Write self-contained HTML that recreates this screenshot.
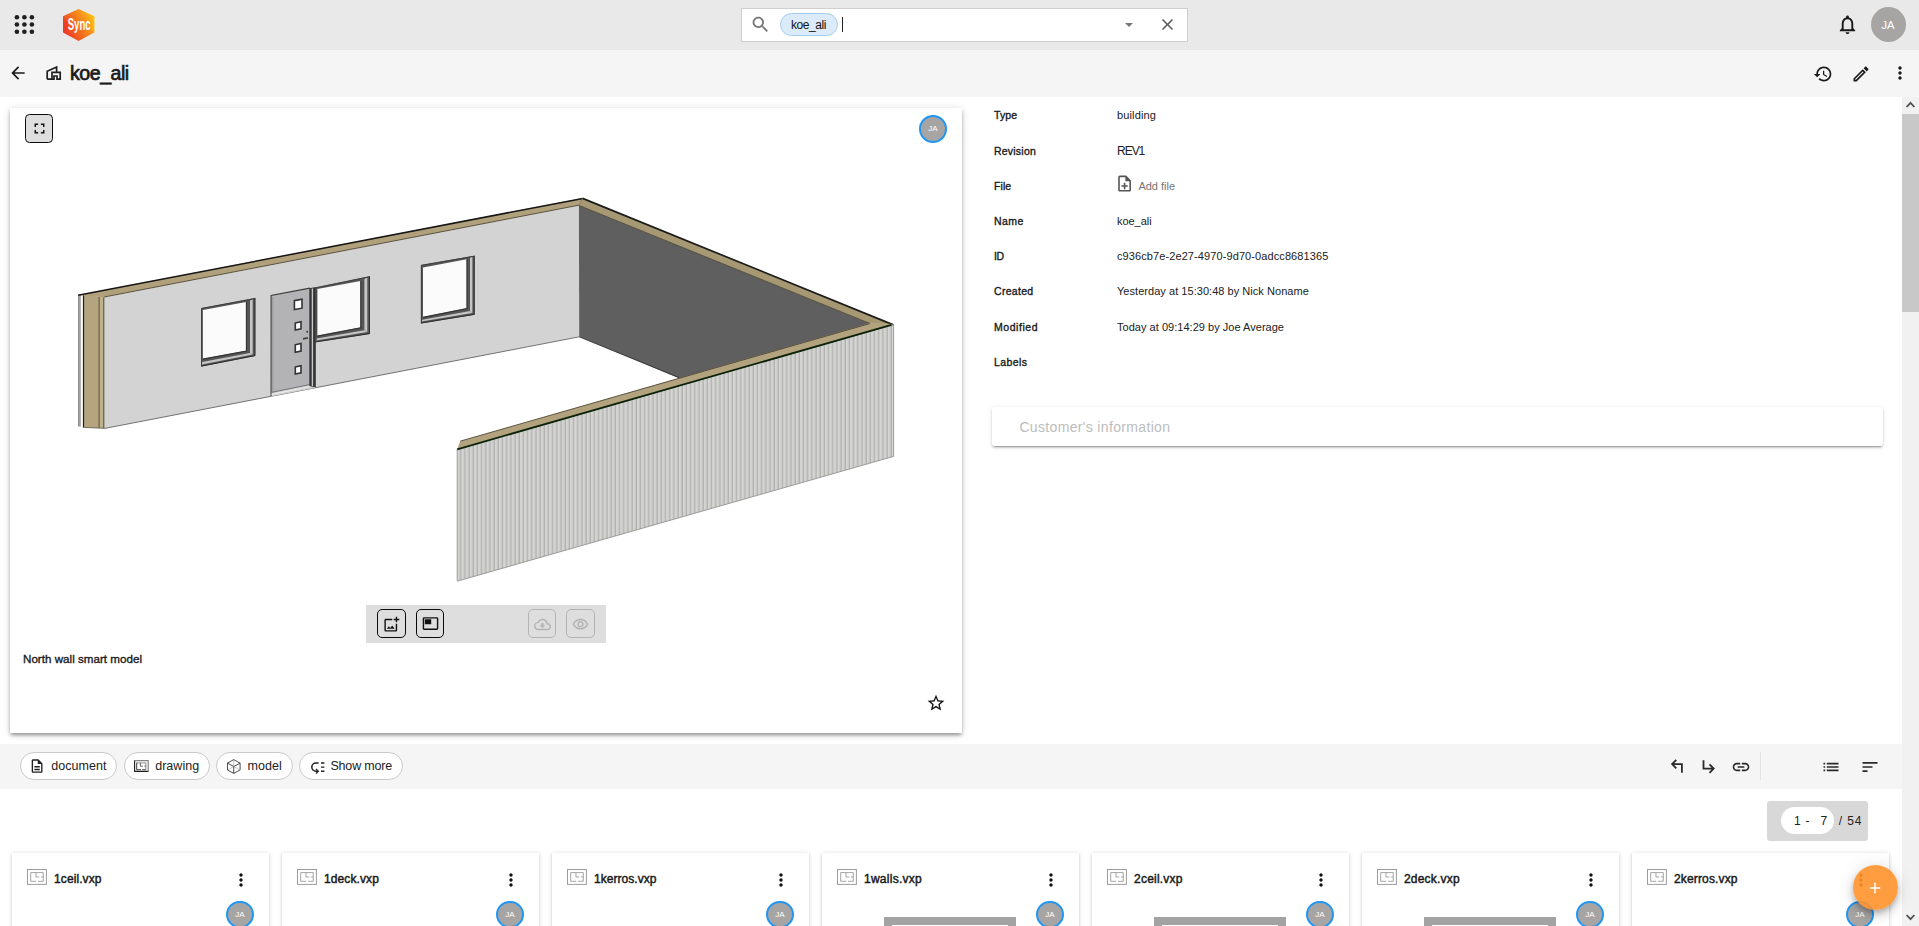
<!DOCTYPE html>
<html lang="en"><head><meta charset="utf-8"><title>koe_ali</title>
<style>
*{box-sizing:border-box;margin:0;padding:0}
html,body{width:1919px;height:926px;overflow:hidden;background:#fff}
body{font-family:"Liberation Sans",Arial,sans-serif;color:#212121;position:relative;font-size:12px}
.abs{position:absolute}
svg{display:block;overflow:visible}
.ic{position:absolute}
#topbar{left:0;top:0;width:1919px;height:50px;background:#e9e9e9}
#titlebar{left:0;top:50px;width:1919px;height:47px;background:#f5f5f5}
#main{left:0;top:97px;width:1902px;height:647px;background:#fff}
#filterbar{left:0;top:744px;width:1902px;height:45px;background:#f5f5f5}
#scroll{left:1902px;top:97px;width:17px;height:829px;background:#f1f1f1}
#thumb{left:1902px;top:114px;width:17px;height:198px;background:#c8c8c8}
.t{position:absolute;white-space:nowrap;line-height:1}
.b{font-weight:bold}
.chip{top:752px;height:28px;background:#fff;border:1px solid #cacaca;border-radius:14px}
.ct{top:760px;font-size:12.500px;color:#222}
.pg{top:815px;font-size:12px;color:#222}
.fcard{top:852.700px;width:257.300px;height:80px;background:#fff;box-shadow:0 2px 1px -1px rgba(0,0,0,.2),0 1px 1px 0 rgba(0,0,0,.14),0 1px 3px 0 rgba(0,0,0,.12),0 0 6px rgba(0,0,0,.08)}
.ft{top:873px;font-size:12px;color:#1a1a1a;font-weight:normal;-webkit-text-stroke:.45px #1a1a1a}
.lab{font-size:10.5px;color:#1a1a1a;font-weight:normal;-webkit-text-stroke:.35px #1a1a1a}
.val{font-size:11px;color:#212121}
</style></head><body>
<div id="topbar" class="abs"></div>
<div id="titlebar" class="abs"></div>
<div id="main" class="abs"></div>
<div id="filterbar" class="abs"></div>
<div id="scroll" class="abs"></div>
<div id="thumb" class="abs"></div>

<svg class="ic" style="left:12px;top:12px" width="25" height="25" viewBox="0 0 25 25" fill="#1f1f1f">
<circle cx="4.9" cy="5.2" r="2.3"/><circle cx="12.4" cy="5.2" r="2.3"/><circle cx="19.9" cy="5.2" r="2.3"/>
<circle cx="4.9" cy="12.5" r="2.3"/><circle cx="12.4" cy="12.5" r="2.3"/><circle cx="19.9" cy="12.5" r="2.3"/>
<circle cx="4.9" cy="19.8" r="2.3"/><circle cx="12.4" cy="19.8" r="2.3"/><circle cx="19.9" cy="19.8" r="2.3"/>
</svg>
<svg class="ic" style="left:62px;top:8px" width="34" height="34" viewBox="0 0 34 34">
<defs><linearGradient id="lg1" x1="0.05" y1="0.75" x2="0.95" y2="0.2"><stop offset="0" stop-color="#ee3a24"/><stop offset="0.45" stop-color="#f3701f"/><stop offset="0.8" stop-color="#f9a01a"/><stop offset="1" stop-color="#fdc20f"/></linearGradient>
<linearGradient id="lg2" x1="0" y1="0" x2="1" y2="0"><stop offset="0" stop-color="#f58a1c"/><stop offset="1" stop-color="#ffd10a"/></linearGradient></defs>
<path d="M16.600 0.900 L32.300 8.200 L32.300 24.400 L16.600 33.100 L1 24.400 L1 8.200 Z" fill="url(#lg1)"/>
<path d="M32.300 8.200 L32.300 24.400 L25 16.500 Z" fill="url(#lg2)" opacity=".55"/>
<path d="M1 8.200 L1 24.400 L9 20 Z" fill="#ec3323" opacity=".5"/>
<text transform="translate(5.700,22) scale(0.590,1)" font-family="Liberation Sans,sans-serif" font-weight="bold" font-size="16.200" fill="#fff">Sync</text>
</svg>
<div class="abs" style="left:741px;top:8px;width:447px;height:34px;background:#fff;border:1px solid #cfcfcf"></div>
<svg class="ic" style="left:750px;top:14px" width="21" height="21" viewBox="0 0 24 24" fill="#777"><path d="M15.5 14h-.79l-.28-.27C15.41 12.59 16 11.11 16 9.500 16 5.910 13.090 3 9.500 3S3 5.910 3 9.500 5.910 16 9.500 16c1.610 0 3.090-.59 4.230-1.570l.27.28v.79l5 4.990L20.490 19l-4.990-5zm-6 0C7.010 14 5 11.990 5 9.500S7.010 5 9.500 5 14 7.010 14 9.500 11.990 14 9.500 14z"/></svg>
<div class="abs" style="left:780px;top:13px;width:58px;height:23px;border-radius:12px;background:#dcebf9;border:1px solid #a5cdf3"></div>
<div class="t" id="chipk" style="left:791px;top:18.5px;font-size:12px;color:#111;letter-spacing:-0.422px">koe_ali</div>
<div class="abs" style="left:842px;top:17px;width:1px;height:15px;background:#222"></div>
<svg class="ic" style="left:1125px;top:23px" width="8" height="4" viewBox="0 0 8 4"><path d="M0 0h8L4 4z" fill="#777"/></svg>
<svg class="ic" style="left:1157.900px;top:15.250px" width="19" height="19" viewBox="0 0 24 24" fill="#5a5a5a"><path d="M19 6.410L17.590 5 12 10.590 6.410 5 5 6.410 10.590 12 5 17.590 6.410 19 12 13.410 17.590 19 19 17.590 13.410 12z"/></svg>
<svg class="ic" style="left:1835.600px;top:13px" width="23" height="23" viewBox="0 0 24 24" fill="#1a1a1a"><path d="M12 22c1.100 0 2-.9 2-2h-4c0 1.100.9 2 2 2zm6-6v-5c0-3.070-1.630-5.640-4.500-6.320V4c0-.83-.67-1.500-1.500-1.500s-1.500.67-1.500 1.500v.68C7.640 5.360 6 7.920 6 11v5l-2 2v1h16v-1l-2-2zm-2 1H8v-6c0-2.480 1.510-4.500 4-4.500s4 2.020 4 4.500v6z"/></svg>
<div class="abs" style="left:1870.500px;top:7px;width:35px;height:35px;border-radius:50%;background:#a6a5a4"></div>
<div class="t" style="left:1870.500px;top:20px;width:35px;text-align:center;font-size:11.200px;color:#fff">JA</div>


<svg class="ic" style="left:8px;top:63px" width="20" height="20" viewBox="0 0 24 24" fill="#1a1a1a"><path d="M20 11H7.830l5.590-5.590L12 4l-8 8 8 8 1.410-1.410L7.830 13H20v-2z"/></svg>
<svg class="ic" style="left:45px;top:65px" width="17" height="16" viewBox="0 0 17 16" fill="none" stroke="#1f1f1f" stroke-width="1.700" stroke-linejoin="miter"><path d="M2.200 14.200 V6.300 L11.600 2 V7.300"/><path d="M2.200 14.200 H9 V11 H12 V14.200 H15.200 V7.300 H7 V14.200"/></svg>
<div class="t b" id="ttl" style="left:70px;top:63.600px;font-size:19.600px;color:#1a1a1a;font-weight:normal;-webkit-text-stroke:.7px #1a1a1a;letter-spacing:-0.483px">koe_ali</div>
<svg class="ic" style="left:1813.400px;top:63.500px" width="20" height="20" viewBox="0 0 24 24" fill="#1a1a1a"><path d="M13 3c-4.970 0-9 4.030-9 9H1l3.890 3.890.07.140L9 12H6c0-3.870 3.130-7 7-7s7 3.130 7 7-3.130 7-7 7c-1.930 0-3.680-.79-4.940-2.060l-1.420 1.420C8.270 19.990 10.510 21 13 21c4.970 0 9-4.030 9-9s-4.030-9-9-9zm-1 5v5l4.280 2.540.72-1.210-3.500-2.080V8H12z"/></svg>
<svg class="ic" style="left:1851.200px;top:63.500px" width="20" height="20" viewBox="0 0 24 24" fill="#1a1a1a"><path d="M14.060 9.020l.92.92L5.920 19H5v-.92l9.060-9.060M17.660 3c-.25 0-.51.1-.7.290l-1.830 1.830 3.750 3.750 1.830-1.830c.39-.39.39-1.020 0-1.410l-2.340-2.340c-.2-.2-.45-.29-.71-.29zm-3.600 3.190L3 17.250V21h3.750L17.810 9.940l-3.750-3.750z"/></svg>
<svg class="ic" style="left:1889.600px;top:63.300px" width="20" height="20" viewBox="0 0 24 24" fill="#1a1a1a"><path d="M12 8c1.100 0 2-.9 2-2s-.9-2-2-2-2 .9-2 2 .9 2 2 2zm0 2c-1.100 0-2 .9-2 2s.9 2 2 2 2-.9 2-2-.9-2-2-2zm0 6c-1.100 0-2 .9-2 2s.9 2 2 2 2-.9 2-2-.9-2-2-2z"/></svg>
<svg class="ic" style="left:1906px;top:101px" width="9" height="7" viewBox="0 0 9 7" fill="none" stroke="#505050" stroke-width="1.800"><path d="M0.600 6 L4.500 1.800 L8.400 6"/></svg>
<svg class="ic" style="left:1906px;top:914px" width="9" height="7" viewBox="0 0 9 7" fill="none" stroke="#505050" stroke-width="1.800"><path d="M0.600 1 L4.500 5.200 L8.400 1"/></svg>


<div class="abs" id="mcard" style="left:10px;top:108px;width:952px;height:625px;background:#fff;box-shadow:0 3px 4px -1px rgba(0,0,0,.28),0 1px 8px 0 rgba(0,0,0,.14),0 2px 3px rgba(0,0,0,.12)"></div>
<div class="abs" style="left:25px;top:114px;width:28px;height:29px;border:1.400px solid #0a0a0a;border-radius:4.500px;background:#dedede"></div>
<svg class="ic" style="left:30.700px;top:120.400px" width="17" height="17" viewBox="0 0 24 24" fill="#111"><path d="M7 14H5v5h5v-2H7v-3zm-2-4h2V7h3V5H5v5zm12 7h-3v2h5v-5h-2v3zM14 5v2h3v3h2V5h-5z"/></svg>
<div class="abs" style="left:919px;top:115px;width:28px;height:28px;border-radius:50%;background:#a6a5a4;border:2px solid #2196f3"></div>
<div class="t" style="left:919px;top:125px;width:28px;text-align:center;font-size:8px;color:#fff">JA</div>

<svg class="ic" style="left:0;top:0" width="1919" height="926" viewBox="0 0 1919 926">
<defs><pattern id="corr" x="457.200" y="0" width="4.180" height="10" patternUnits="userSpaceOnUse"><rect width="4.180" height="10" fill="#d4d4d2"/><rect x="2.200" width="1" height="10" fill="#c4c4c2"/><rect x="3.200" width="0.980" height="10" fill="#b1b1af"/></pattern></defs>
<!-- north wall -->
<linearGradient id="gs" x1="0" x2="1" y1="0" y2="0"><stop offset="0" stop-color="#858585"/><stop offset="1" stop-color="#c0c0c0"/></linearGradient>
<polygon points="78,294.900 81.100,294.400 81.100,426.800 78,426.500" fill="url(#gs)"/>
<polygon points="83.300,294.500 104.300,297.200 104.300,428.300 83.300,427.400" fill="#b4a580"/>
<polygon points="99.300,296.400 103.600,297.100 103.600,428.200 99.300,428" fill="#c0b18c"/>
<path d="M83.500 294.600 V427.400" stroke="#18260f" stroke-width="1.200"/>
<path d="M99.100 296.400 V428" stroke="#3e3a2b" stroke-width="0.800"/>
<path d="M83.300 427.400 L104.300 428.300" stroke="#4a4636" stroke-width="0.700"/>
<path d="M103.900 297.200 V428.300" stroke="#5e5e5e" stroke-width="1.500"/>
<polygon points="78.100,294.900 582.800,198 578.900,205.400 104.300,297.200 83.300,295.600" fill="#b0a17c"/>
<polygon points="104.600,297.200 578.900,205.400 579.200,336.850 104.600,428.500" fill="#d3d3d3"/>
<path d="M104.300 428.500 L579.200 336.850" stroke="#555" stroke-width="0.800" fill="none"/>
<path d="M104.300 297 L578.900 205.200" stroke="#4e4736" stroke-width="0.900" fill="none"/>
<path d="M78.100 295.300 L582.800 198.400" stroke="#161616" stroke-width="1.500" fill="none"/>
<!-- door -->
<polygon points="270.600,295.600 315.600,287 315.600,387.700 270.600,396.400" fill="#d0d0d0"/>
<polygon points="271.100,295.500 309.800,288.100 309.800,384.600 272,392.300" fill="#b3b2b5"/>
<path d="M271.100 396 V295.500 L309.800 288.100" stroke="#3c3c3c" stroke-width="1.100" fill="none"/>
<path d="M272.800 392.600 V297" stroke="#8e8e90" stroke-width="0.700" fill="none"/>
<path d="M272 392.300 L309.800 384.600" stroke="#6a6a6a" stroke-width="0.900"/>
<path d="M271.500 394.300 L310 386.500" stroke="#ececec" stroke-width="1.200"/>
<polygon points="309.300,288.200 315.800,286.900 315.800,387.500 309.300,386" fill="#353535"/>
<path d="M312.400 288.500 V386" stroke="#c9c9c9" stroke-width="1.400"/>
<polygon points="294.4,300.6 302.0,299.3 302.0,308.2 294.4,309.5" fill="#fff" stroke="#333" stroke-width="1.6"/><polygon points="295.3,323.0 301.0,321.7 301.0,328.8 295.3,330.1" fill="#fff" stroke="#333" stroke-width="1.6"/><polygon points="295.3,344.8 301.0,343.5 301.0,351.0 295.3,352.3" fill="#fff" stroke="#333" stroke-width="1.6"/><polygon points="295.3,367.0 301.0,365.7 301.0,372.8 295.3,374.1" fill="#fff" stroke="#333" stroke-width="1.6"/>
<path d="M303 338.800 L307.900 337.900" stroke="#444" stroke-width="1.700"/><circle cx="307.200" cy="331.800" r="1" fill="#444"/>
<polygon points="201.2,308.2 255.3,298.1 255.3,355.9 201.2,366.6" fill="#555"/><polygon points="250.0,300.4 252.7,299.2 252.7,354.4 250.0,352.9" fill="#c4c4c4"/><polygon points="202.2,362.0 250.0,352.9 252.7,354.4 201.7,364.4" fill="#c4c4c4"/><path d="M254.9 298.1 L254.9 355.6 L201.2 366.2" stroke="#2e2e2e" stroke-width="1" fill="none"/><path d="M201.5 366.6 L201.5 308.4 L255.3 298.4" stroke="#3a3a3a" stroke-width="0.9" fill="none"/><polygon points="202.9,310.0 246.1,302.0 246.1,350.7 202.9,358.7" fill="#fbfbfb"/><path d="M246.4 302.0 L246.4 351.0 L202.9 359.1" stroke="#333" stroke-width="1.1" fill="none"/>
<polygon points="315.6,287.5 369.9,276.3 369.9,333.9 315.6,342.3" fill="#555"/><polygon points="364.4,279.0 367.3,277.6 367.3,332.1 364.4,330.2" fill="#c4c4c4"/><polygon points="316.6,338.5 364.4,330.2 367.3,332.1 316.1,340.5" fill="#c4c4c4"/><path d="M369.5 276.3 L369.5 333.6 L315.6 341.9" stroke="#2e2e2e" stroke-width="1" fill="none"/><path d="M315.9 342.3 L315.9 287.7 L369.9 276.6" stroke="#3a3a3a" stroke-width="0.9" fill="none"/><polygon points="317.4,288.9 360.5,281.0 360.5,327.5 317.4,335.7" fill="#fbfbfb"/><path d="M360.8 281.0 L360.8 327.8 L317.4 336.1" stroke="#333" stroke-width="1.1" fill="none"/>
<polygon points="421.0,265.1 474.6,255.8 474.6,314.7 421.0,323.4" fill="#555"/><polygon points="470.0,257.8 472.4,256.8 472.4,312.9 470.0,311.0" fill="#c4c4c4"/><polygon points="422.2,319.7 470.0,311.0 472.4,312.9 421.6,321.6" fill="#c4c4c4"/><path d="M474.2 255.8 L474.2 314.4 L421.0 323.0" stroke="#2e2e2e" stroke-width="1" fill="none"/><path d="M421.3 323.4 L421.3 265.3 L474.6 256.1" stroke="#3a3a3a" stroke-width="0.9" fill="none"/><polygon points="423.0,267.5 466.7,259.3 466.7,308.3 423.0,317.0" fill="#fbfbfb"/><path d="M467.0 259.3 L467.0 308.6 L423.0 317.4" stroke="#333" stroke-width="1.1" fill="none"/>
<!-- east wall inside -->
<polygon points="578.900,205.400 871,324 679.600,378.600 579.200,336.850" fill="#5f5f5f"/>
<path d="M579.200 336.850 L678.800 377.450" stroke="#2d2d2d" stroke-width="0.800"/>
<polygon points="582.800,198 893.600,324.500 870,323.500 578.900,205.400" fill="#a69873"/>
<path d="M578.900 205.400 L870 323.500" stroke="#3c382a" stroke-width="0.800"/>
<path d="M582.800 198 L578.900 205.400" stroke="#7a7158" stroke-width="0.800"/><path d="M582.600 198.350 L893.400 324.850" stroke="#1c1c1c" stroke-width="1.700"/>
<!-- south wall -->
<polygon points="457.200,449.300 891,325.300 893.600,325 893.600,456.400 458,581 457.200,581" fill="url(#corr)" stroke="#8c8c8c" stroke-width="0.800"/>
<polygon points="460.100,441.200 870,323 893.600,324 890,325.200 457.200,449.300" fill="#b2a37e"/>
<path d="M460.100 441.200 L870 323.500" stroke="#4e4736" stroke-width="0.900"/>
<path d="M457.200 449.300 L891.500 324.900" stroke="#0c2208" stroke-width="1.800"/>
</svg>

<div class="abs" style="left:366px;top:605px;width:240px;height:38px;background:#dedede"></div>
<div class="abs" style="left:377px;top:609px;width:29px;height:29px;border:1.300px solid #0a0a0a;border-radius:5px"></div>
<div class="abs" style="left:415.800px;top:609px;width:28.300px;height:29px;border:1.300px solid #0a0a0a;border-radius:5px"></div>
<div class="abs" style="left:527.800px;top:609px;width:28.300px;height:29px;border:1px solid #b4b4b4;border-radius:5px"></div>
<div class="abs" style="left:566px;top:609px;width:29px;height:29px;border:1px solid #b4b4b4;border-radius:5px"></div>
<svg class="ic" style="left:383.200px;top:615.500px" width="17" height="17" viewBox="0 0 24 24" fill="#111"><path d="M18 20H4V6h9V4H4c-1.100 0-2 .9-2 2v14c0 1.100.9 2 2 2h14c1.100 0 2-.9 2-2v-9h-2v9zm-7.790-3.170l-1.960-2.360L5.500 18h11l-3.540-4.710zM20 4V1h-2v3h-3c.01.01 0 2 0 2h3v2.990c.01.01 2 0 2 0V6h3V4h-3z"/></svg>
<svg class="ic" style="left:421.700px;top:615.300px" width="17" height="17" viewBox="0 0 24 24" fill="#111"><path d="M21 3H3c-1.100 0-2 .9-2 2v14c0 1.100.9 2 2 2h18c1.100 0 2-.9 2-2V5c0-1.100-.9-2-2-2zm0 16H3V5h18v14zM4 6h9v7H4z"/></svg>
<svg class="ic" style="left:533.500px;top:615.500px" width="17" height="17" viewBox="0 0 24 24" fill="#b3b3b3"><path d="M19.350 10.040C18.670 6.590 15.640 4 12 4 9.110 4 6.600 5.640 5.350 8.040 2.340 8.360 0 10.910 0 14c0 3.310 2.690 6 6 6h13c2.760 0 5-2.240 5-5 0-2.640-2.050-4.780-4.650-4.960zM19 18H6c-2.210 0-4-1.790-4-4 0-2.050 1.530-3.760 3.560-3.970l1.070-.11.5-.95C8.080 7.140 9.940 6 12 6c2.620 0 4.880 1.860 5.390 4.430l.3 1.500 1.530.11c1.560.1 2.780 1.410 2.780 2.960 0 1.650-1.350 3-3 3zm-5.550-8h-2.900v3H8l4 4 4-4h-2.550z"/></svg>
<svg class="ic" style="left:572px;top:615.600px" width="17" height="17" viewBox="0 0 24 24" fill="#b3b3b3"><path d="M12 6c3.790 0 7.170 2.130 8.820 5.500C19.170 14.870 15.790 17 12 17s-7.170-2.130-8.820-5.500C4.830 8.130 8.210 6 12 6m0-2C7 4 2.730 7.110 1 11.500 2.730 15.890 7 19 12 19s9.270-3.110 11-7.500C21.270 7.110 17 4 12 4zm0 5c1.380 0 2.500 1.120 2.500 2.500S13.380 14 12 14s-2.500-1.120-2.500-2.500S10.620 9 12 9m0-2c-2.480 0-4.500 2.020-4.500 4.500S9.520 16 12 16s4.500-2.020 4.500-4.500S14.480 7 12 7z"/></svg>
<div class="t b" id="cap" style="left:23px;top:653.300px;font-size:11.600px;color:#1a1a1a;font-weight:normal;-webkit-text-stroke:.35px #1a1a1a;letter-spacing:0.021px">North wall smart model</div>
<svg class="ic" style="left:926px;top:693.400px" width="20" height="20" viewBox="0 0 24 24" fill="#111"><path d="M22 9.240l-7.190-.62L12 2 9.190 8.630 2 9.240l5.460 4.730L5.820 21 12 17.270 18.180 21l-1.630-7.030L22 9.240zM12 15.400l-3.760 2.270 1-4.280-3.320-2.880 4.380-.38L12 6.100l1.710 4.040 4.380.38-3.320 2.880 1 4.280L12 15.400z"/></svg>

<div class="t b lab" id="l0" style="left:994px;top:110px;letter-spacing:0.145px">Type</div>
<div class="t b lab" id="l1" style="left:994px;top:146px;letter-spacing:0.217px">Revision</div>
<div class="t b lab" id="l2" style="left:994px;top:181px;letter-spacing:0.093px">File</div>
<div class="t b lab" id="l3" style="left:994px;top:216px;letter-spacing:0.459px">Name</div>
<div class="t b lab" id="l4" style="left:994px;top:251px;letter-spacing:-0.500px">ID</div>
<div class="t b lab" id="l5" style="left:994px;top:286px;letter-spacing:0.306px">Created</div>
<div class="t b lab" id="l6" style="left:994px;top:322px;letter-spacing:0.557px">Modified</div>
<div class="t b lab" id="l7" style="left:994px;top:357px;letter-spacing:0.392px">Labels</div>
<div class="t val" id="v0" style="left:1117px;top:110px;letter-spacing:0.139px">building</div>
<div class="t val" id="v1" style="left:1117px;top:145px;font-size:12px;letter-spacing:-1.020px">REV1</div>
<div class="t val" id="v2" style="left:1117px;top:216px;letter-spacing:-0.044px">koe_ali</div>
<div class="t val" id="v3" style="left:1117px;top:251px;letter-spacing:0.096px">c936cb7e-2e27-4970-9d70-0adcc8681365</div>
<div class="t val" id="v4" style="left:1117px;top:286px;letter-spacing:0.040px">Yesterday at 15:30:48 by Nick Noname</div>
<div class="t val" id="v5" style="left:1117px;top:322px;letter-spacing:0.027px">Today at 09:14:29 by Joe Average</div>
<svg class="ic" style="left:1115.400px;top:174px" width="19.200" height="19.200" viewBox="0 0 24 24" fill="#555"><path d="M13 11h-2v3H8v2h3v3h2v-3h3v-2h-3zm1-9H6c-1.100 0-2 .9-2 2v16c0 1.100.89 2 1.990 2H18c1.100 0 2-.9 2-2V8l-6-6zm4 18H6V4h7v5h5v11z"/></svg>
<div class="t" id="addf" style="left:1138.400px;top:180.700px;font-size:11px;color:#757575;letter-spacing:-0.000px">Add file</div>
<div class="abs" style="left:992px;top:407px;width:891px;height:39px;background:#fff;border-radius:3px;box-shadow:0 3px 1px -2px rgba(0,0,0,.2),0 2px 2px 0 rgba(0,0,0,.14),0 1px 5px 0 rgba(0,0,0,.12)"></div>
<div class="t" id="cust" style="left:1019.400px;top:420px;font-size:14px;color:#bcbcbc;letter-spacing:0.338px">Customer's information</div>


<div class="abs chip" style="left:20px;width:97px"></div>
<div class="abs chip" style="left:124px;width:86px"></div>
<div class="abs chip" style="left:216px;width:77px"></div>
<div class="abs chip" style="left:299px;width:104px"></div>
<svg class="ic" style="left:29.100px;top:757.900px" width="16.200" height="16.200" viewBox="0 0 24 24" fill="#1f1f1f"><path d="M8 16h8v2H8zm0-4h8v2H8zm6-10H6c-1.100 0-2 .9-2 2v16c0 1.100.89 2 1.990 2H18c1.100 0 2-.9 2-2V8l-6-6zm4 18H6V4h7v5h5v11z"/></svg>
<div class="t ct" id="c0" style="left:51.200px;letter-spacing:0.050px">document</div>
<svg class="ic" style="left:134px;top:760px" width="14.800" height="12" viewBox="0 0 14.800 12" fill="none"><path d="M0.600 0.300 V11.400 H14.500" stroke="#1a1a1a" stroke-width="1.100"/><path d="M0.600 0.600 H14.200 V11.400" stroke="#858585" stroke-width="1.200"/><path d="M2.700 2.600 V9.700 H7 M8.300 9.700 H11.900" stroke="#222" stroke-width="0.900"/><path d="M2.700 2.900 H11.900 V9.700" stroke="#808080" stroke-width="0.900"/><path d="M6.400 2.900 V6.200 H9 M10.300 6.200 H11.900" stroke="#555" stroke-width="0.900"/></svg>
<div class="t ct" id="c1" style="left:155.200px;letter-spacing:0.035px">drawing</div>
<svg class="ic" style="left:227.300px;top:758.900px" width="13.600" height="15" viewBox="0 0 13.600 15" fill="none" stroke="#2e2e2e" stroke-width="0.850" stroke-linejoin="round"><path d="M6.750 0.600 L13.100 4.100 V11 L6.750 14.400 L0.500 11 V4.100 Z"/><path d="M0.500 4.100 L6.750 7.500 L13.100 4.100 M6.750 7.500 V14.400"/><path d="M6.750 0.600 V7.500 M0.500 11 L6.750 7.500 L13.100 11" stroke-width="0.500" stroke="#8a8a8a"/></svg>
<div class="t ct" id="c2" style="left:247.500px;letter-spacing:0.086px">model</div>
<svg class="ic" style="left:310.600px;top:760.900px" width="14" height="13.500" viewBox="0 0 14 13.500" fill="none" stroke="#1f1f1f" stroke-width="1.500"><path d="M7.600 2 H4.900 A4.100 4.100 0 0 0 4.900 10.200 H6.600"/><path d="M4.900 7.900 L7.300 10.200 L4.900 12.600" stroke-width="1.300"/><path d="M10 2 H13.400 M10 6.100 H13.400 M10 10.300 H13.400" stroke-width="1.400"/></svg>
<div class="t ct" id="c3" style="left:330.400px;letter-spacing:-0.167px">Show more</div>
<svg class="ic" style="left:1670px;top:759px" width="15" height="15" viewBox="0 0 15 15" fill="none" stroke="#2a2a2a" stroke-width="1.800"><path d="M6.300 0.800 L2.100 5.100 L6.300 9.400 M2.300 5.100 H11.900 V13.800"/></svg>
<svg class="ic" style="left:1701px;top:759px" width="15" height="15" viewBox="0 0 15 15" fill="none" stroke="#2a2a2a" stroke-width="1.800"><path d="M8.500 5.300 L12.700 9.600 L8.500 13.900 M12.500 9.600 H2.500 V1.300"/></svg>
<svg class="ic" style="left:1731px;top:756.600px" width="20" height="20" viewBox="0 0 24 24" fill="#2a2a2a"><path d="M3.900 12c0-1.710 1.390-3.100 3.100-3.100h4V7H7c-2.760 0-5 2.240-5 5s2.240 5 5 5h4v-1.900H7c-1.710 0-3.100-1.390-3.100-3.100zM8 13h8v-2H8v2zm9-6h-4v1.900h4c1.710 0 3.100 1.390 3.100 3.100s-1.390 3.100-3.100 3.100h-4V17h4c2.760 0 5-2.240 5-5s-2.240-5-5-5z"/></svg>
<div class="abs" style="left:1759.600px;top:752px;width:1px;height:28px;background:#e3e3e3"></div>
<svg class="ic" style="left:1821.300px;top:756.800px" width="20" height="20" viewBox="0 0 24 24" fill="#2a2a2a"><path d="M3 13h2v-2H3v2zm0 4h2v-2H3v2zm0-8h2V7H3v2zm4 4h14v-2H7v2zm0 4h14v-2H7v2zM7 7v2h14V7H7z"/></svg>
<svg class="ic" style="left:1860.400px;top:756.500px" width="20" height="20" viewBox="0 0 24 24" fill="#2a2a2a"><path d="M3 18h6v-2H3v2zM3 6v2h18V6H3zm0 7h12v-2H3v2z"/></svg>
<div class="abs" style="left:1767px;top:801px;width:101px;height:40px;background:#d8d8d8;border-radius:3px"></div>
<div class="abs" style="left:1780.800px;top:807px;width:53.200px;height:27px;background:#fff;border-radius:13.500px"></div>
<div class="t pg" id="p0" style="left:1794px;letter-spacing:.7px">1 -</div>
<div class="t pg" id="p1" style="left:1820.500px">7</div>
<div class="t pg" id="p2" style="left:1838.700px;letter-spacing:.9px">/ 54</div>

<div class="abs fcard" style="left:11.7px"></div>
<svg class="ic" style="left:27.1px;top:869.400px" width="19.600" height="15.400" viewBox="0 0 19.600 15.400" fill="none" stroke="#9c9c9c"><rect x="0.500" y="0.500" width="18.900" height="14.900" stroke-width="1"/><path d="M3.700 3.600 V12.300 H9.300 M11 12.300 H16.300 M3.700 3.600 H16.300 V12.300 M9 3.600 V8 H12.300 M14 8 H16.300" stroke-width="0.900"/></svg>
<div class="t b ft" id="f0" style="left:54.0px;letter-spacing:0.101px">1ceil.vxp</div>
<svg class="ic" style="left:231.1px;top:869.900px" width="20" height="20" viewBox="0 0 24 24" fill="#111"><path d="M12 8c1.100 0 2-.9 2-2s-.9-2-2-2-2 .9-2 2 .9 2 2 2zm0 2c-1.100 0-2 .9-2 2s.9 2 2 2 2-.9 2-2-.9-2-2-2zm0 6c-1.100 0-2 .9-2 2s.9 2 2 2 2-.9 2-2-.9-2-2-2z"/></svg>
<div class="abs" style="left:226.2px;top:900.700px;width:27.600px;height:27.600px;border-radius:50%;background:#a6a5a4;border:2px solid #2196f3"></div>
<div class="t" style="left:226.2px;top:910.500px;width:27.600px;text-align:center;font-size:8px;color:#fff">JA</div>
<div class="abs fcard" style="left:281.7px"></div>
<svg class="ic" style="left:297.1px;top:869.400px" width="19.600" height="15.400" viewBox="0 0 19.600 15.400" fill="none" stroke="#9c9c9c"><rect x="0.500" y="0.500" width="18.900" height="14.900" stroke-width="1"/><path d="M3.700 3.600 V12.300 H9.300 M11 12.300 H16.300 M3.700 3.600 H16.300 V12.300 M9 3.600 V8 H12.300 M14 8 H16.300" stroke-width="0.900"/></svg>
<div class="t b ft" id="f1" style="left:324.0px;letter-spacing:0.108px">1deck.vxp</div>
<svg class="ic" style="left:501.1px;top:869.900px" width="20" height="20" viewBox="0 0 24 24" fill="#111"><path d="M12 8c1.100 0 2-.9 2-2s-.9-2-2-2-2 .9-2 2 .9 2 2 2zm0 2c-1.100 0-2 .9-2 2s.9 2 2 2 2-.9 2-2-.9-2-2-2zm0 6c-1.100 0-2 .9-2 2s.9 2 2 2 2-.9 2-2-.9-2-2-2z"/></svg>
<div class="abs" style="left:496.2px;top:900.700px;width:27.600px;height:27.600px;border-radius:50%;background:#a6a5a4;border:2px solid #2196f3"></div>
<div class="t" style="left:496.2px;top:910.500px;width:27.600px;text-align:center;font-size:8px;color:#fff">JA</div>
<div class="abs fcard" style="left:551.7px"></div>
<svg class="ic" style="left:567.1px;top:869.400px" width="19.600" height="15.400" viewBox="0 0 19.600 15.400" fill="none" stroke="#9c9c9c"><rect x="0.500" y="0.500" width="18.900" height="14.900" stroke-width="1"/><path d="M3.700 3.600 V12.300 H9.300 M11 12.300 H16.300 M3.700 3.600 H16.300 V12.300 M9 3.600 V8 H12.300 M14 8 H16.300" stroke-width="0.900"/></svg>
<div class="t b ft" id="f2" style="left:594.0px;letter-spacing:0.047px">1kerros.vxp</div>
<svg class="ic" style="left:771.1px;top:869.900px" width="20" height="20" viewBox="0 0 24 24" fill="#111"><path d="M12 8c1.100 0 2-.9 2-2s-.9-2-2-2-2 .9-2 2 .9 2 2 2zm0 2c-1.100 0-2 .9-2 2s.9 2 2 2 2-.9 2-2-.9-2-2-2zm0 6c-1.100 0-2 .9-2 2s.9 2 2 2 2-.9 2-2-.9-2-2-2z"/></svg>
<div class="abs" style="left:766.2px;top:900.700px;width:27.600px;height:27.600px;border-radius:50%;background:#a6a5a4;border:2px solid #2196f3"></div>
<div class="t" style="left:766.2px;top:910.500px;width:27.600px;text-align:center;font-size:8px;color:#fff">JA</div>
<div class="abs fcard" style="left:821.7px"></div>
<svg class="ic" style="left:837.1px;top:869.400px" width="19.600" height="15.400" viewBox="0 0 19.600 15.400" fill="none" stroke="#9c9c9c"><rect x="0.500" y="0.500" width="18.900" height="14.900" stroke-width="1"/><path d="M3.700 3.600 V12.300 H9.300 M11 12.300 H16.300 M3.700 3.600 H16.300 V12.300 M9 3.600 V8 H12.300 M14 8 H16.300" stroke-width="0.900"/></svg>
<div class="t b ft" id="f3" style="left:864.0px;letter-spacing:0.259px">1walls.vxp</div>
<svg class="ic" style="left:1041.1px;top:869.900px" width="20" height="20" viewBox="0 0 24 24" fill="#111"><path d="M12 8c1.100 0 2-.9 2-2s-.9-2-2-2-2 .9-2 2 .9 2 2 2zm0 2c-1.100 0-2 .9-2 2s.9 2 2 2 2-.9 2-2-.9-2-2-2zm0 6c-1.100 0-2 .9-2 2s.9 2 2 2 2-.9 2-2-.9-2-2-2z"/></svg>
<div class="abs" style="left:1036.2px;top:900.700px;width:27.600px;height:27.600px;border-radius:50%;background:#a6a5a4;border:2px solid #2196f3"></div>
<div class="t" style="left:1036.2px;top:910.500px;width:27.600px;text-align:center;font-size:8px;color:#fff">JA</div>
<div class="abs" style="left:884.25px;top:917px;width:131.500px;height:9px;background:#a3a3a3"></div><div class="abs" style="left:892.00px;top:925px;width:116px;height:1px;background:#fff"></div>
<div class="abs fcard" style="left:1091.7px"></div>
<svg class="ic" style="left:1107.1px;top:869.400px" width="19.600" height="15.400" viewBox="0 0 19.600 15.400" fill="none" stroke="#9c9c9c"><rect x="0.500" y="0.500" width="18.900" height="14.900" stroke-width="1"/><path d="M3.700 3.600 V12.300 H9.300 M11 12.300 H16.300 M3.700 3.600 H16.300 V12.300 M9 3.600 V8 H12.300 M14 8 H16.300" stroke-width="0.900"/></svg>
<div class="t b ft" id="f4" style="left:1134.0px;letter-spacing:0.226px">2ceil.vxp</div>
<svg class="ic" style="left:1311.1px;top:869.900px" width="20" height="20" viewBox="0 0 24 24" fill="#111"><path d="M12 8c1.100 0 2-.9 2-2s-.9-2-2-2-2 .9-2 2 .9 2 2 2zm0 2c-1.100 0-2 .9-2 2s.9 2 2 2 2-.9 2-2-.9-2-2-2zm0 6c-1.100 0-2 .9-2 2s.9 2 2 2 2-.9 2-2-.9-2-2-2z"/></svg>
<div class="abs" style="left:1306.2px;top:900.700px;width:27.600px;height:27.600px;border-radius:50%;background:#a6a5a4;border:2px solid #2196f3"></div>
<div class="t" style="left:1306.2px;top:910.500px;width:27.600px;text-align:center;font-size:8px;color:#fff">JA</div>
<div class="abs" style="left:1154.25px;top:917px;width:131.500px;height:9px;background:#a3a3a3"></div><div class="abs" style="left:1162.00px;top:925px;width:116px;height:1px;background:#fff"></div>
<div class="abs fcard" style="left:1361.7px"></div>
<svg class="ic" style="left:1377.1px;top:869.400px" width="19.600" height="15.400" viewBox="0 0 19.600 15.400" fill="none" stroke="#9c9c9c"><rect x="0.500" y="0.500" width="18.900" height="14.900" stroke-width="1"/><path d="M3.700 3.600 V12.300 H9.300 M11 12.300 H16.300 M3.700 3.600 H16.300 V12.300 M9 3.600 V8 H12.300 M14 8 H16.300" stroke-width="0.900"/></svg>
<div class="t b ft" id="f5" style="left:1404.0px;letter-spacing:0.196px">2deck.vxp</div>
<svg class="ic" style="left:1581.1px;top:869.900px" width="20" height="20" viewBox="0 0 24 24" fill="#111"><path d="M12 8c1.100 0 2-.9 2-2s-.9-2-2-2-2 .9-2 2 .9 2 2 2zm0 2c-1.100 0-2 .9-2 2s.9 2 2 2 2-.9 2-2-.9-2-2-2zm0 6c-1.100 0-2 .9-2 2s.9 2 2 2 2-.9 2-2-.9-2-2-2z"/></svg>
<div class="abs" style="left:1576.2px;top:900.700px;width:27.600px;height:27.600px;border-radius:50%;background:#a6a5a4;border:2px solid #2196f3"></div>
<div class="t" style="left:1576.2px;top:910.500px;width:27.600px;text-align:center;font-size:8px;color:#fff">JA</div>
<div class="abs" style="left:1424.25px;top:917px;width:131.500px;height:9px;background:#a3a3a3"></div><div class="abs" style="left:1432.00px;top:925px;width:116px;height:1px;background:#fff"></div>
<div class="abs fcard" style="left:1631.7px"></div>
<svg class="ic" style="left:1647.1px;top:869.400px" width="19.600" height="15.400" viewBox="0 0 19.600 15.400" fill="none" stroke="#9c9c9c"><rect x="0.500" y="0.500" width="18.900" height="14.900" stroke-width="1"/><path d="M3.700 3.600 V12.300 H9.300 M11 12.300 H16.300 M3.700 3.600 H16.300 V12.300 M9 3.600 V8 H12.300 M14 8 H16.300" stroke-width="0.900"/></svg>
<div class="t b ft" id="f6" style="left:1674.0px;letter-spacing:0.148px">2kerros.vxp</div>
<svg class="ic" style="left:1851.1px;top:869.900px" width="20" height="20" viewBox="0 0 24 24" fill="#111"><path d="M12 8c1.100 0 2-.9 2-2s-.9-2-2-2-2 .9-2 2 .9 2 2 2zm0 2c-1.100 0-2 .9-2 2s.9 2 2 2 2-.9 2-2-.9-2-2-2zm0 6c-1.100 0-2 .9-2 2s.9 2 2 2 2-.9 2-2-.9-2-2-2z"/></svg>
<div class="abs" style="left:1846.2px;top:900.700px;width:27.600px;height:27.600px;border-radius:50%;background:#a6a5a4;border:2px solid #2196f3"></div>
<div class="t" style="left:1846.2px;top:910.500px;width:27.600px;text-align:center;font-size:8px;color:#fff">JA</div>
<div class="abs" style="left:1853.100px;top:865px;width:44.800px;height:44.800px;border-radius:50%;background:rgba(255,146,43,.9);box-shadow:0 3px 5px -1px rgba(0,0,0,.2),0 6px 10px 0 rgba(0,0,0,.14),0 1px 18px 0 rgba(0,0,0,.12)"></div>
<svg class="ic" style="left:1866.400px;top:879px" width="18" height="18" viewBox="0 0 24 24" fill="#fff"><path d="M19 13h-6v6h-2v-6H5v-2h6V5h2v6h6v2z"/></svg>

</body></html>
